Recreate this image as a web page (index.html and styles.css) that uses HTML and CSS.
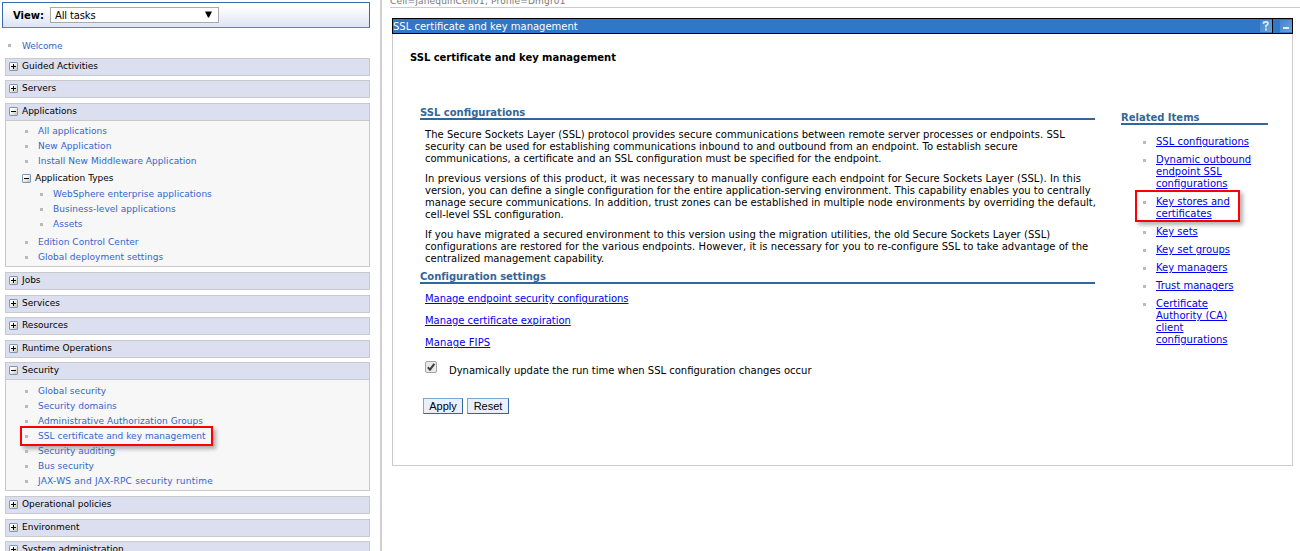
FILE: index.html
```html
<!DOCTYPE html>
<html lang="en">
<head>
<meta charset="utf-8">
<title>SSL certificate and key management</title>
<link rel="stylesheet" href="styles.css">
</head>
<body>
<svg class="defs" width="0" height="0" aria-hidden="true">
  <defs>
    <linearGradient id="tile" x1="0" y1="0" x2="1" y2="1"><stop offset="0.3" stop-color="#fff"/><stop offset="1" stop-color="#c6bfb0"/></linearGradient>
    <linearGradient id="btn" x1="0" y1="0" x2="1" y2="1"><stop offset="0" stop-color="#4284cc"/><stop offset="1" stop-color="#6ba4dc"/></linearGradient>
    <symbol id="plus" viewBox="0 0 9 9"><rect x=".5" y=".5" width="8" height="8" rx=".6" fill="url(#tile)" stroke="#7898b5"/><path d="M2 4.5h5M4.5 2v5" stroke="#000"/></symbol>
    <symbol id="minus" viewBox="0 0 9 9"><rect x=".5" y=".5" width="8" height="8" rx=".6" fill="url(#tile)" stroke="#7898b5"/><path d="M2 4.5h5" stroke="#000"/></symbol>
  </defs>
</svg>
<div class="page">
  <nav class="sidebar">
    <div class="view"><span class="view-label">View:</span><div class="select"><span>All tasks</span><svg width="7" height="7" viewBox="0 0 7 7"><path d="M0 .5h7L4 6.5H3z"/></svg></div></div>
    <ul class="welcome"><li><a>Welcome</a></li></ul>
    <section class="task"><h3><svg class="tog"><use href="#plus"/></svg><span>Guided Activities</span></h3></section>
    <section class="task late"><h3><svg class="tog"><use href="#plus"/></svg><span>Servers</span></h3></section>
    <section class="task open">
      <h3><svg class="tog"><use href="#minus"/></svg><span>Applications</span></h3>
      <ul>
        <li><a>All applications</a></li>
        <li><a>New Application</a></li>
        <li><a>Install New Middleware Application</a></li>
      </ul>
      <div class="sub"><svg class="tog"><use href="#minus"/></svg><span>Application Types</span></div>
      <ul class="nested">
        <li><a>WebSphere enterprise applications</a></li>
        <li><a>Business-level applications</a></li>
        <li><a>Assets</a></li>
      </ul>
      <ul>
        <li><a>Edition Control Center</a></li>
        <li><a>Global deployment settings</a></li>
      </ul>
    </section>
    <section class="task"><h3><svg class="tog"><use href="#plus"/></svg><span>Jobs</span></h3></section>
    <section class="task"><h3><svg class="tog"><use href="#plus"/></svg><span>Services</span></h3></section>
    <section class="task late"><h3><svg class="tog"><use href="#plus"/></svg><span>Resources</span></h3></section>
    <section class="task"><h3><svg class="tog"><use href="#plus"/></svg><span>Runtime Operations</span></h3></section>
    <section class="task open late security">
      <h3><svg class="tog"><use href="#minus"/></svg><span>Security</span></h3>
      <ul>
        <li><a>Global security</a></li>
        <li><a>Security domains</a></li>
        <li><a>Administrative Authorization Groups</a></li>
        <li class="marked"><a>SSL certificate and key management</a></li>
        <li><a>Security auditing</a></li>
        <li><a>Bus security</a></li>
        <li><a class="wide">JAX-WS and JAX-RPC security runtime</a></li>
      </ul>
    </section>
    <section class="task"><h3><svg class="tog"><use href="#plus"/></svg><span>Operational policies</span></h3></section>
    <section class="task"><h3><svg class="tog"><use href="#plus"/></svg><span>Environment</span></h3></section>
    <section class="task late"><h3><svg class="tog"><use href="#plus"/></svg><span>System administration</span></h3></section>
  </nav>
  <main>
    <div class="crumb"><span>Cell=janequinCell01, Profile=Dmgr01</span></div>
    <div class="portlet">
      <header class="bar">
        <span class="bar-title">SSL certificate and key management</span>
        <svg width="34" height="14" viewBox="0 0 34 14"><rect x="2" y="1" width="12" height="12" fill="url(#btn)"/><path d="M5.500 5V4.200q0-1.200 1.200-1.200h1.600Q10 3 10 4.500T8 6.600V8.500M8 9.500v2" fill="none" stroke="#d3e5f5" stroke-width="1.800"/><path d="M14.500 0v14" stroke="#000"/><rect x="22" y="1" width="12" height="12" fill="url(#btn)"/><path d="M25 9h6" stroke="#e2edf8" stroke-width="2"/></svg>
      </header>
      <div class="content">
        <div class="left">
          <h1><span>SSL certificate and key management</span></h1>
          <div class="forms">
            <h2 class="h-ssl"><span>SSL configurations</span></h2>
            <div class="text">
              <p><span class="l2">The Secure Sockets Layer (SSL) protocol provides secure communications between remote server processes or endpoints. SSL</span><br><span class="l1">security can be used for establishing communications inbound to and outbound from an endpoint. To establish secure</span><br><span>communications, a certificate and an SSL configuration must be specified for the endpoint.</span></p>
              <p><span class="l3">In previous versions of this product, it was necessary to manually configure each endpoint for Secure Sockets Layer (SSL). In this</span><br><span>version, you can define a single configuration for the entire application-serving environment. This capability enables you to centrally</span><br><span class="l1">manage secure communications. In addition, trust zones can be established in multiple node environments by overriding the default,</span><br><span>cell-level SSL configuration.</span></p>
              <p><span class="l2">If you have migrated a secured environment to this version using the migration utilities, the old Secure Sockets Layer (SSL)</span><br><span class="l2">configurations are restored for the various endpoints. However, it is necessary for you to re-configure SSL to take advantage of the</span><br><span>centralized management capability.</span></p>
            </div>
            <h2 class="h-conf"><span>Configuration settings</span></h2>
            <div class="links"><a>Manage endpoint security configurations</a><a>Manage certificate expiration</a><a class="fips">Manage FIPS</a></div>
            <div class="option"><svg width="12" height="12" viewBox="0 0 12 12"><rect x=".5" y=".5" width="11" height="11" rx="1.500" fill="#e9e9e9" stroke="#a5a5a5"/><path d="M2.800 6.300 5 8.600 9.300 2.800" fill="none" stroke="#3f3f3f" stroke-width="2"/></svg><span>Dynamically update the run time when SSL configuration changes occur</span></div>
            <div class="buttons"><button class="b-apply">Apply</button><button class="b-reset">Reset</button></div>
          </div>
        </div>
        <aside>
          <h2><span>Related Items</span></h2>
          <ul>
            <li><a>SSL configurations</a></li>
            <li><a>Dynamic outbound<br>endpoint SSL<br>configurations</a></li>
            <li class="boxed"><a>Key stores and<br>certificates</a></li>
            <li><a>Key sets</a></li>
            <li><a>Key set groups</a></li>
            <li><a>Key managers</a></li>
            <li><a>Trust managers</a></li>
            <li><a>Certificate<br>Authority (CA)<br>client<br>configurations</a></li>
          </ul>
        </aside>
      </div>
    </div>
  </main>
</div>
</body>
</html>
```
FILE: styles.css
```css
*, *::before, *::after { box-sizing: border-box; }
body { margin: 0; font-family: "DejaVu Sans", Verdana, sans-serif; font-size: 10px; line-height: 12px; color: #000; background: #fff; }
ul, h1, h2, h3, p { margin: 0; padding: 0; }
ul { list-style: none; }
.defs { display: block; height: 0; }
.page { display: flex; height: 551px; overflow: hidden; }
.page span, .page a { white-space: nowrap; }

.sidebar { flex: none; width: 382px; padding: 2px 10px 0 2px; border-right: 2px solid #d0d0d0; font-size: 9px; }
.view { display: flex; align-items: center; width: 368px; height: 26px; padding-left: 10px; border: 1px solid #336bab; border-bottom-color: #6484ae; background: linear-gradient(#fff 15%, #dde3f3); }
.view-label { width: 37px; padding-top: 1px; font-weight: bold; font-size: 10px; }
.select { display: flex; align-items: center; justify-content: space-between; width: 169px; height: 16px; padding: 0 6px 0 4px; border: 1px solid #a9a9a9; background: #fff; font-size: 10px; letter-spacing: -.15px; }
.select span { padding-top: 1px; }
.select svg { margin-top: -1px; }
.welcome { margin: 10px 0 4px; }
.sidebar li { position: relative; height: 15px; padding-left: 32px; line-height: 15px; color: #36c; letter-spacing: .04px; }
.sidebar li::before { content: ""; position: absolute; left: 19px; top: 6px; width: 3px; height: 3px; background: #b9b9b9; }
.sidebar .welcome li { height: 16px; padding-left: 20px; line-height: 16px; letter-spacing: -.1px; }
.sidebar .welcome li::before { left: 6px; }
.wide { letter-spacing: .22px; }
.task { width: 365px; margin: 0 0 5px 3px; border: 1px solid #c9c9cb; background: #f7f7f7; }
.task.late { margin-top: -1px; }
.task h3 { display: flex; height: 16px; padding-left: 3px; gap: 4px; font-size: 9px; font-weight: normal; line-height: 15px; background: #dbdfef; }
.tog { flex: none; width: 9px; height: 9px; margin-top: 3px; }
.open { padding-bottom: 1px; }
.open.security { padding-bottom: 1px; }
.open h3 { height: 17px; margin-bottom: 3px; border-bottom: 1px solid #c9c9cb; }
.open.security h3 { margin-bottom: 4px; }
.sub { display: flex; height: 18px; padding-left: 16px; gap: 4px; line-height: 18px; }
.sub .tog { margin-top: 5px; }
.nested { margin-bottom: 3px; }
.sidebar .nested li { padding-left: 47px; }
.sidebar .nested li::before { left: 34px; }
.sidebar .marked::after { content: ""; position: absolute; left: 14px; top: -3px; width: 193px; height: 20px; border: 2px solid #f00; box-shadow: 3px 3px 4px rgba(0,0,0,.3); }

main { flex: 1; min-width: 0; padding-left: 8px; }
.crumb { display: flex; height: 8px; border-bottom: 1px solid #ccc; line-height: 12px; font-size: 9px; color: #777; }
.crumb span { margin-top: -5px; letter-spacing: .18px; }
.portlet { width: 901px; height: 448px; margin: 10px 0 0 2px; border: 1px solid #ccc; border-top: 0; }
.bar { display: flex; justify-content: space-between; height: 16px; margin: 0 -1px; border: 1px solid #000; background: #3077c8; color: #fff; line-height: 16px; }
.content { display: flex; }
.left { width: 702px; padding: 18px 0 0 17px; }
h1 { font-size: 10px; line-height: 12px; letter-spacing: -.03px; }
.forms { padding-left: 10px; }
h2 { height: 15px; border-bottom: 2px solid #369; color: #369; font-size: 10px; line-height: 12px; }
.h-ssl { margin-top: 41px; line-height: 16px; }
.text { padding: 9px 0 0 5px; }
.text p { margin-bottom: 8px; }
.l1 { letter-spacing: .014px; }
.l2 { letter-spacing: .044px; }
.l3 { letter-spacing: .07px; }
.h-conf { height: 13px; margin-top: -2px; letter-spacing: -.04px; }
.links { display: flex; flex-direction: column; gap: 10px; padding: 9px 0 0 5px; color: #00e; letter-spacing: -.04px; }
.links a { width: max-content; text-decoration: underline; }
.links .fips { letter-spacing: .12px; }
.option { display: flex; gap: 12px; margin: 12px 0 0 5px; }
.option span { margin-top: 4px; }
.buttons { display: flex; gap: 4px; margin: 21px 0 0 3px; }
button { height: 16px; padding: 0; border: 1px solid; border-color: #7ca6cf #369 #369 #7ca6cf; background: #e8f0ff; color: #000; font: 11px/13px "Liberation Sans", Arial, sans-serif; }
.b-apply { width: 40px; }
.b-reset { width: 42px; }
aside { width: 147px; margin: 78px 0 0 26px; }
aside h2 { height: 13px; line-height: 12px; }
aside ul { display: flex; flex-direction: column; gap: 6px; padding-top: 11px; }
aside li { position: relative; padding-left: 35px; color: #00e; }
aside li a { display: block; width: max-content; text-decoration: underline; }
aside li::before { content: ""; position: absolute; left: 22px; top: 5px; width: 3px; height: 3px; background: #b9b9b9; }
.boxed::after { content: ""; position: absolute; left: 14px; top: -6px; width: 105px; height: 32px; border: 2px solid #f00; box-shadow: 3px 3px 4px rgba(0,0,0,.3); }
```
